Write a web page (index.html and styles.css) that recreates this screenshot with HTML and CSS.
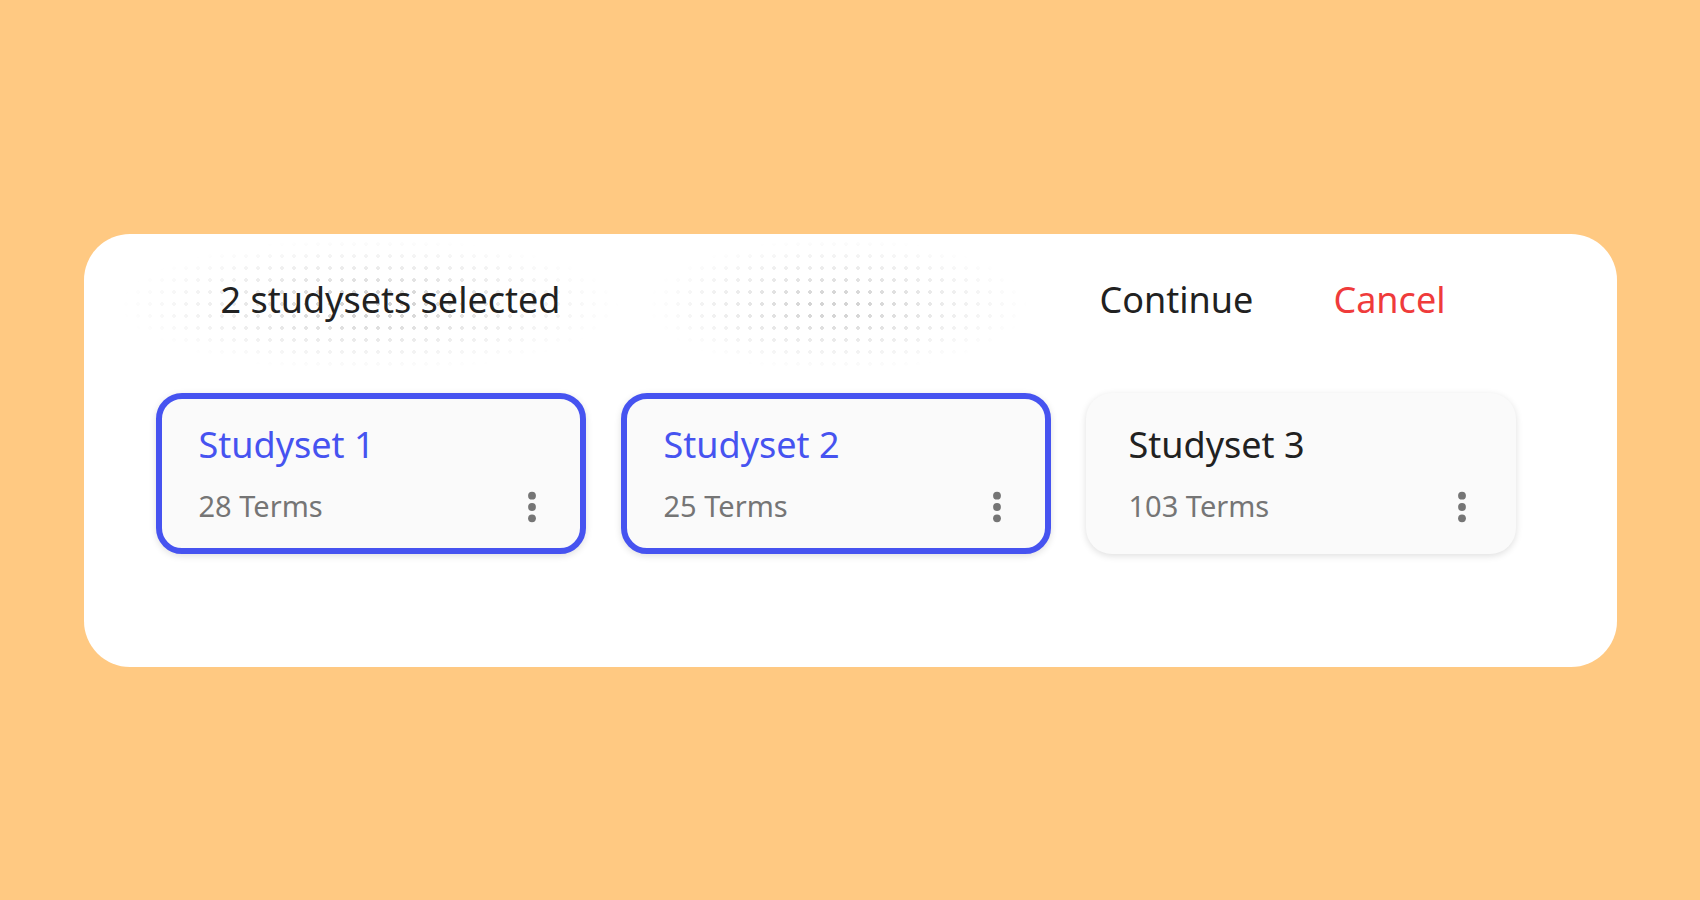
FILE: index.html
```html
<!DOCTYPE html>
<html lang="en">
<head>
<meta charset="utf-8">
<title>Studysets</title>
<link rel="stylesheet" href="styles.css">
</head>
<body>
<main class="stage">
  <section class="dialog">
    <div class="dots dots-a" aria-hidden="true"></div>
    <div class="dots dots-b" aria-hidden="true"></div>
    <header class="dialog-head">
      <h1 class="count">2 studysets selected</h1>
      <div class="actions">
        <button class="btn btn-continue">Continue</button>
        <button class="btn btn-cancel">Cancel</button>
      </div>
    </header>
    <div class="sets">
      <article class="set is-selected">
        <h2 class="set-name">Studyset 1</h2>
        <div class="set-meta">
          <span class="terms">28 Terms</span>
          <svg class="kebab" viewBox="0 0 10 32" width="10" height="32" aria-hidden="true"><circle cx="5" cy="4.7" r="3.9"/><circle cx="5" cy="16" r="3.9"/><circle cx="5" cy="27.3" r="3.9"/></svg>
        </div>
      </article>
      <article class="set is-selected">
        <h2 class="set-name">Studyset 2</h2>
        <div class="set-meta">
          <span class="terms">25 Terms</span>
          <svg class="kebab" viewBox="0 0 10 32" width="10" height="32" aria-hidden="true"><circle cx="5" cy="4.7" r="3.9"/><circle cx="5" cy="16" r="3.9"/><circle cx="5" cy="27.3" r="3.9"/></svg>
        </div>
      </article>
      <article class="set">
        <h2 class="set-name">Studyset 3</h2>
        <div class="set-meta">
          <span class="terms">103 Terms</span>
          <svg class="kebab" viewBox="0 0 10 32" width="10" height="32" aria-hidden="true"><circle cx="5" cy="4.7" r="3.9"/><circle cx="5" cy="16" r="3.9"/><circle cx="5" cy="27.3" r="3.9"/></svg>
        </div>
      </article>
    </div>
  </section>
</main>
</body>
</html>
```

FILE: styles.css
```css
* { box-sizing: border-box; }

html, body {
  margin: 0;
  padding: 0;
  height: 100%;
}

body {
  background: #ffc982;
  font-family: "Noto Sans", "Open Sans", sans-serif;
  color: #212121;
}

.stage {
  height: 100vh;
  display: flex;
  align-items: center;
  justify-content: center;
}

.dialog {
  position: relative;
  width: 1533px;
  background: #ffffff;
  border-radius: 46px;
  padding: 41px 0 113px 0;
  overflow: hidden;
}

.dots {
  position: absolute;
  z-index: 0;
  pointer-events: none;
  background-image: radial-gradient(circle, #d4d4d4 1.6px, transparent 2.1px);
  background-size: 12px 12px;
  background-position: 0 0;
  -webkit-mask-image: radial-gradient(ellipse closest-side, rgba(0,0,0,1) 15%, rgba(0,0,0,0.45) 55%, rgba(0,0,0,0) 100%);
  mask-image: radial-gradient(ellipse closest-side, rgba(0,0,0,1) 15%, rgba(0,0,0,0.45) 55%, rgba(0,0,0,0) 100%);
}

.dots-a {
  left: 36px;
  top: 4px;
  width: 500px;
  height: 134px;
}

.dots-b {
  left: 564px;
  top: 4px;
  width: 380px;
  height: 134px;
}

.dialog-head {
  position: relative;
  z-index: 1;
  display: flex;
  align-items: center;
  padding: 0 171px 0 137px;
}

.count {
  margin: 0;
  font-size: 36px;
  font-weight: 400;
  line-height: 49px;
  color: #212121;
}

.actions {
  margin-left: auto;
  display: flex;
  gap: 80px;
}

.btn {
  border: 0;
  background: none;
  padding: 0;
  margin: 0;
  font-family: inherit;
  font-size: 36px;
  line-height: 49px;
  font-weight: 400;
  cursor: pointer;
}

.btn-continue { color: #212121; }
.btn-cancel { color: #ef3b3b; }

.sets {
  position: relative;
  z-index: 1;
  display: grid;
  grid-template-columns: repeat(3, 430px);
  gap: 35px;
  padding-left: 72px;
  margin-top: 69px;
}

.set {
  background: #fafafa;
  border: 6px solid transparent;
  border-radius: 26px;
  padding: 21px 43px 23px 37px;
  box-shadow: 0 2px 7px rgba(0, 0, 0, 0.13);
}

.set.is-selected {
  border-color: #4653f0;
}

.set-name {
  margin: 0;
  font-size: 36px;
  font-weight: 400;
  line-height: 49px;
  color: #212121;
}

.set.is-selected .set-name {
  color: #4653f0;
}

.set-meta {
  margin-top: 17px;
  display: flex;
  align-items: center;
  justify-content: space-between;
}

.terms {
  font-size: 29px;
  line-height: 39px;
  color: #757575;
}

.kebab {
  fill: #757575;
  display: block;
  margin-top: 4px;
}
```
